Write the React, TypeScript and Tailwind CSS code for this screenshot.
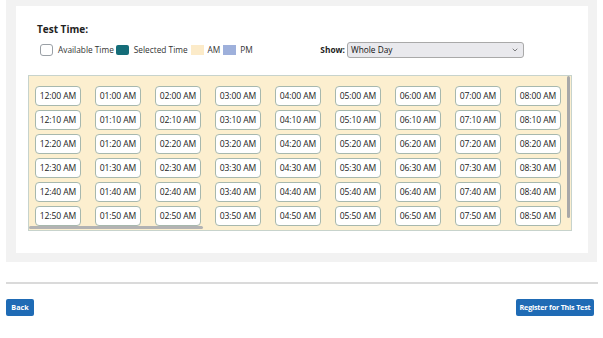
import { ChevronDown } from "lucide-react";

const hours = Array.from({ length: 9 }, (_, i) => i);
const minutes = ["00", "10", "20", "30", "40", "50"];

function label(h: number, m: string) {
  const hr = h % 12 === 0 ? 12 : h % 12;
  const ampm = h < 12 ? "AM" : "PM";
  return `${String(hr).padStart(2, "0")}:${m} ${ampm}`;
}

function Legend() {
  return (
    <div className="flex items-center pl-[12px] text-[8.3px] text-[#333]">
      <span className="w-[13px] h-[12px] rounded-[3px] border border-[#9aa0a6] bg-white" />
      <span className="ml-[5px]">Available Time</span>
      <span className="ml-[2px] w-[13px] h-[10px] rounded-[2px] bg-[#156d79]" />
      <span className="ml-[5px]">Selected Time</span>
      <span className="ml-[3px] w-[13px] h-[10px] bg-[#fcebc9]" />
      <span className="ml-[4px]">AM</span>
      <span className="ml-[3px] w-[13px] h-[10px] bg-[#9eb0db]" />
      <span className="ml-[4px]">PM</span>

      <div className="ml-auto mr-[52px] flex items-center">
        <span className="font-bold text-[8.3px] text-[#222]">Show:</span>
        <div className="ml-[2px] w-[177px] h-[16px] flex items-center justify-between rounded-[3px] border border-[#a9a9a9] bg-[#e9e9ed] pl-[3px] pr-[4px]">
          <span className="text-[8.3px] text-[#111]">Whole Day</span>
          <ChevronDown size={8} strokeWidth={2} className="text-[#444]" />
        </div>
      </div>
    </div>
  );
}

function TimeGrid() {
  return (
    <div className="relative mt-[17px] w-[544px] h-[156px] overflow-hidden border border-[#c7d3cc] bg-[#fcefcf]">
      <div className="flex gap-[14px] pl-[6px] pt-[10px]">
        {hours.map((h) => (
          <div key={h} className="flex flex-col gap-[4px]">
            {minutes.map((m) => (
              <div
                key={m}
                className="w-[46px] h-[20px] flex items-center justify-center whitespace-nowrap rounded-[4px] border border-[#a7b8ae] bg-white text-[8.6px] text-[#222] tracking-[-0.1px]"
              >
                {label(h, m)}
              </div>
            ))}
          </div>
        ))}
      </div>
      {/* scrollbars */}
      <div className="absolute right-[1px] top-0 w-[3px] h-[142px] rounded-full bg-[#a8a8a8]" />
      <div className="absolute left-0 bottom-[1px] w-[174px] h-[3px] rounded-full bg-[#b3b3b3]" />
    </div>
  );
}

export default function App() {
  return (
    <div className="w-[603px] h-[338px] bg-white font-['Open_Sans',sans-serif]">
      <div className="ml-[6px] w-[591px] h-[262px] bg-[#f2f2f2] pt-[6px] pl-[10px]">
        <div className="w-[572px] h-[247px] bg-white px-[12px] pt-[17px]">
          <div className="pl-[9px] text-[10px] font-bold text-[#222] leading-[12px]">Test Time:</div>
          <div className="mt-[7px]">
            <Legend />
          </div>
          <TimeGrid />
        </div>
      </div>

      <div className="ml-[6px] mr-[5px] mt-[20px] border-t-2 border-[#dadada]" />

      <div className="flex justify-between pl-[6px] pr-[9px] mt-[15px]">
        <button className="w-[28px] h-[17px] rounded-[2px] bg-[#1f6bb5] text-white text-[7.2px] font-bold">
          Back
        </button>
        <button className="w-[78px] h-[17px] whitespace-nowrap rounded-[2px] bg-[#1f6bb5] text-white text-[7.2px] font-bold tracking-[-0.2px]">
          Register for This Test
        </button>
      </div>
    </div>
  );
}
